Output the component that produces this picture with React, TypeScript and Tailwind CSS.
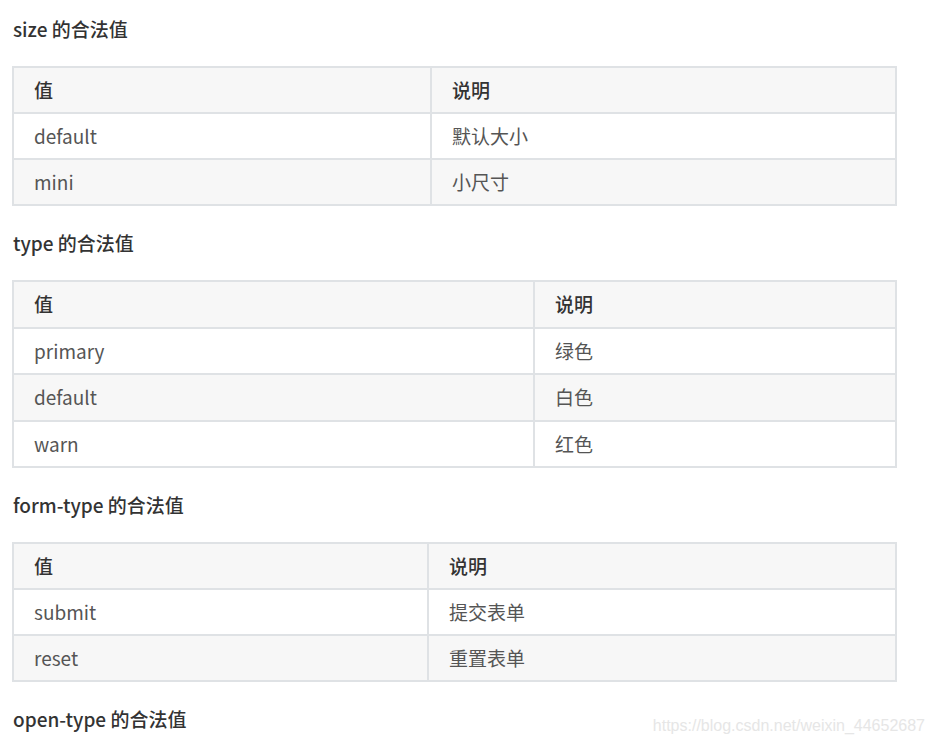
const font = { fontFamily: '"Noto Sans CJK SC", "Noto Sans", sans-serif' };

type Section = { title: string; col: string; h: string; rows: [string, string][] };

const sections: Section[] = [
  {
    title: 'size 的合法值',
    col: 'grid-cols-[416px_1fr]',
    h: 'h-[44px]',
    rows: [
      ['default', '默认大小'],
      ['mini', '小尺寸'],
    ],
  },
  {
    title: 'type 的合法值',
    col: 'grid-cols-[519px_1fr]',
    h: 'h-[44.5px]',
    rows: [
      ['primary', '绿色'],
      ['default', '白色'],
      ['warn', '红色'],
    ],
  },
  {
    title: 'form-type 的合法值',
    col: 'grid-cols-[413px_1fr]',
    h: 'h-[44px]',
    rows: [
      ['submit', '提交表单'],
      ['reset', '重置表单'],
    ],
  },
];

function Table({ s }: { s: Section }) {
  return (
    <div className="w-[885px] border-2 border-[#dfe2e5]">
      <div className={`grid ${s.col} bg-[#f7f7f7] font-medium text-[#333]`}>
        <div className={`flex ${s.h} items-center px-[20px]`}>值</div>
        <div className={`flex ${s.h} items-center border-l-2 border-[#dfe2e5] px-[20px]`}>说明</div>
      </div>
      {s.rows.map(([a, b], i) => (
        <div
          key={a + i}
          className={`grid ${s.col} border-t-2 border-[#dfe2e5] text-[#555] ${i % 2 === 1 ? 'bg-[#f7f7f7]' : 'bg-white'}`}
        >
          <div className={`flex ${s.h} items-center px-[20px]`}>{a}</div>
          <div className={`flex ${s.h} items-center border-l-2 border-[#dfe2e5] px-[20px]`}>{b}</div>
        </div>
      ))}
    </div>
  );
}

export default function App() {
  return (
    <div className="relative h-[746px] w-[934px] overflow-hidden bg-white pl-[12px] pt-[17px] text-[19px]" style={font}>
      {sections.map((s, i) => (
        <div key={s.title} className={i === 0 ? '' : 'mt-[25px]'}>
          <h3 className="mb-[25px] pl-px text-[19px] leading-[24px] font-medium text-[#333]">{s.title}</h3>
          <Table s={s} />
        </div>
      ))}
      <h3 className="mt-[25px] pl-px text-[19px] leading-[24px] font-medium text-[#333]">open-type 的合法值</h3>
      <div
        className="absolute right-[9px] bottom-[8px] text-[16px] text-[#e6e6e6]"
        style={{ fontFamily: '"Liberation Sans", Arial, sans-serif' }}
      >
        https://blog.csdn.net/weixin_44652687
      </div>
    </div>
  );
}
